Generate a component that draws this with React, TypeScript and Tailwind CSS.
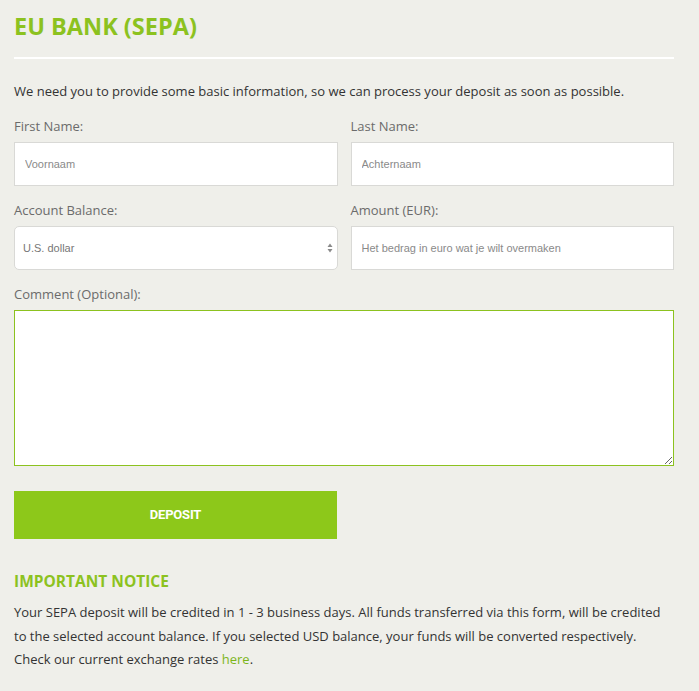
const LABEL = 'block text-[13px] text-[#6b6b6b] mb-[6px] leading-[20px]';
const INPUT =
  'w-full h-[44px] bg-white border border-[#d9d9d6] px-[10px] text-[11px] text-[#555] placeholder:text-[#8a8a8a] outline-none';

function Field({ label, placeholder }: { label: string; placeholder: string }) {
  return (
    <div>
      <label className={LABEL}>{label}</label>
      <input
        className={INPUT}
        style={{ fontFamily: '"Liberation Sans", Arial, sans-serif' }}
        placeholder={placeholder}
      />
    </div>
  );
}

export default function App() {
  return (
    <div
      className="min-h-[691px] w-full bg-[#efefea] text-[#333]"
      style={{ fontFamily: '"Open Sans", "Noto Sans", sans-serif' }}
    >
      <div className="w-[660px] ml-[14px] pt-[10px]">
        {/* Header */}
        <h1 className="text-[23.5px] font-bold leading-[32px] text-[#8cc21f]">EU BANK (SEPA)</h1>
        <div className="mt-[15px] h-[2px] bg-white" />

        <p className="mt-[20px] text-[13px] leading-[24px] text-[#333]">
          We need you to provide some basic information, so we can process your deposit as soon as possible.
        </p>

        {/* Form */}
        <div className="mt-[13px] grid grid-cols-2 gap-x-[13px] gap-y-[14px]">
          <Field label="First Name:" placeholder="Voornaam" />
          <Field label="Last Name:" placeholder="Achternaam" />

          <div>
            <label className={LABEL}>Account Balance:</label>
            <div className="relative">
              <div
                className="w-full h-[44px] bg-white border border-[#d9d9d6] rounded-[5px] px-[8px] flex items-center text-[11px] text-[#777]"
                style={{ fontFamily: '"Liberation Sans", Arial, sans-serif' }}
              >
                U.S. dollar
              </div>
              <svg className="absolute right-[5px] top-[17px]" width="6" height="10" viewBox="0 0 6 10">
                <path d="M3 0.5L5.5 4H0.5Z" fill="#8a8a8a" />
                <path d="M3 9.5L5.5 6H0.5Z" fill="#8a8a8a" />
              </svg>
            </div>
          </div>
          <Field label="Amount (EUR):" placeholder="Het bedrag in euro wat je wilt overmaken" />

          <div className="col-span-2">
            <label className={LABEL}>Comment (Optional):</label>
            <textarea className="block w-full h-[156px] bg-white border border-[#8cc21f] outline-none resize-y" />
          </div>
        </div>

        <button
          className="mt-[25px] w-[323px] h-[48px] bg-[#8dc81a] text-white text-[13px] font-bold tracking-[-0.2px]"
          style={{ fontFamily: 'Roboto, "Liberation Sans", sans-serif' }}
        >
          DEPOSIT
        </button>

        {/* Notice */}
        <h2 className="mt-[30px] text-[15.5px] font-bold leading-[24px] text-[#8cc21f]">IMPORTANT NOTICE</h2>
        <p className="mt-[8px] text-[13px] leading-[23.5px] text-[#333]">
          Your SEPA deposit will be credited in 1 - 3 business days. All funds transferred via this form, will be credited
          to the selected account balance. If you selected USD balance, your funds will be converted respectively.
          Check our current exchange rates <a className="text-[#7cb51a]">here</a>.
        </p>
      </div>
    </div>
  );
}
